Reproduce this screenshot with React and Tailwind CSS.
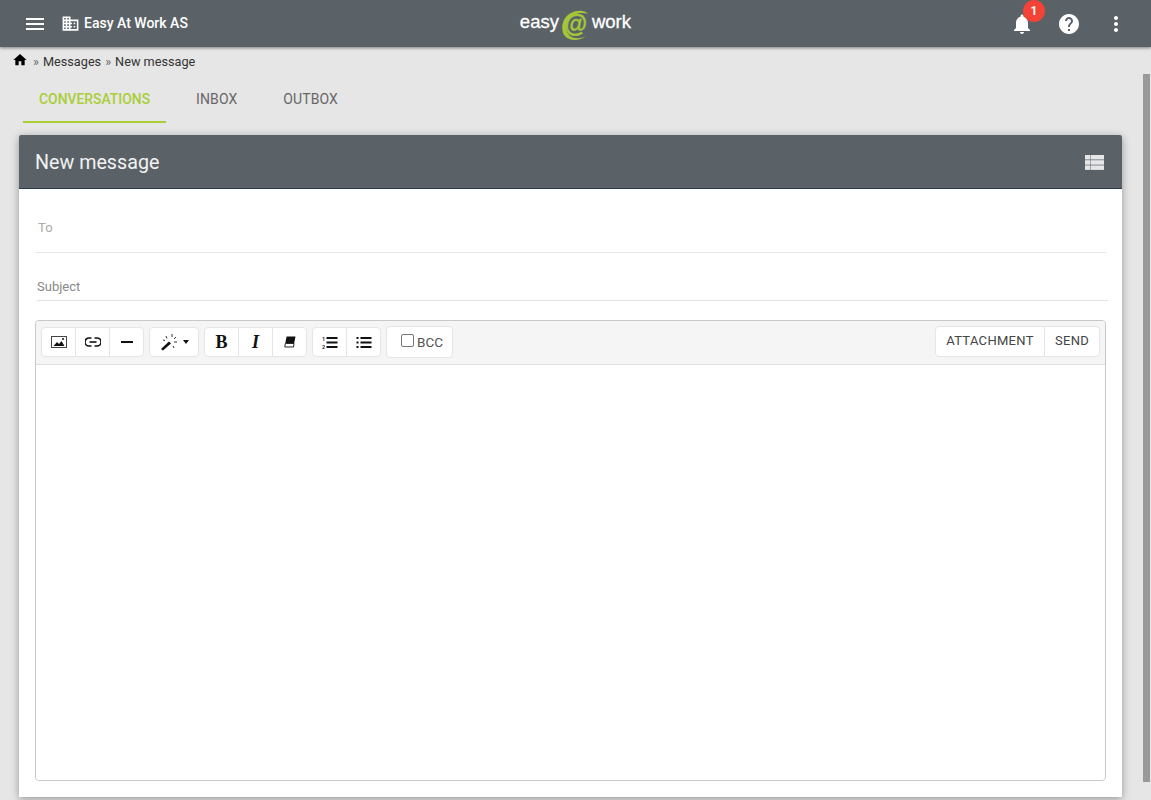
import React from 'react';

const Icon = ({ d, className }) => (
    <svg viewBox="0 0 24 24" fill="currentColor" className={className}>
        <path d={d} />
    </svg>
);

const icons = {
    menu: 'M3 18h18v-2H3v2zm0-5h18v-2H3v2zm0-7v2h18V6H3z',
    domain: 'M12 7V3H2v18h20V7H12zM6 19H4v-2h2v2zm0-4H4v-2h2v2zm0-4H4V9h2v2zm0-4H4V5h2v2zm4 12H8v-2h2v2zm0-4H8v-2h2v2zm0-4H8V9h2v2zm0-4H8V5h2v2zm10 12h-8v-2h2v-2h-2v-2h2v-2h-2V9h8v10zm-2-8h-2v2h2v-2zm0 4h-2v2h2v-2z',
    home: 'M10 20v-6h4v6h5v-8h3L12 3 2 12h3v8z',
    bell: 'M12 22c1.1 0 2-.9 2-2h-4c0 1.1.89 2 2 2zm6-6v-5c0-3.07-1.64-5.64-4.5-6.32V4c0-.83-.67-1.5-1.5-1.5s-1.5.67-1.5 1.5v.68C7.63 5.36 6 7.92 6 11v5l-2 2v1h16v-1l-2-2z',
    help: 'M12 2C6.48 2 2 6.48 2 12s4.48 10 10 10 10-4.48 10-10S17.52 2 12 2zm1 17h-2v-2h2v2zm2.07-7.75l-.9.92C13.45 12.9 13 13.5 13 15h-2v-.5c0-1.1.45-2.1 1.17-2.83l1.24-1.26c.37-.36.59-.86.59-1.41 0-1.1-.9-2-2-2s-2 .9-2 2H8c0-2.21 1.79-4 4-4s4 1.79 4 4c0 .88-.36 1.68-.93 2.25z',
    more: 'M12 8c1.1 0 2-.9 2-2s-.9-2-2-2-2 .9-2 2 .9 2 2 2zm0 2c-1.1 0-2 .9-2 2s.9 2 2 2 2-.9 2-2-.9-2-2-2zm0 6c-1.1 0-2 .9-2 2s.9 2 2 2 2-.9 2-2-.9-2-2-2z',
};

const PictureIcon = () => (
    <svg viewBox="0 0 16 14" className="w-[16px] h-[14px]">
        <rect x="0.5" y="1.5" width="15" height="11" fill="none" stroke="#444" />
        <path d="M2.5 11 L6 7 L8 9 L10.5 6 L13.5 11 Z" fill="#111" />
        <circle cx="12" cy="4" r="1" fill="#111" />
    </svg>
);

const LinkIcon = () => (
    <svg viewBox="0 0 16 10" className="w-[16px] h-[10px]" fill="none" stroke="#111" strokeWidth="1.6">
        <path d="M6.5 1H4a4 4 0 0 0 0 8h2.5" />
        <path d="M9.5 1H12a4 4 0 0 1 0 8H9.5" />
        <path d="M4.5 5h7" />
    </svg>
);

const WandIcon = () => (
    <svg viewBox="0 0 18 18" className="w-[18px] h-[18px]">
        <path d="M1 16 L9 8.5 L11 10.5 L3 17.5 Z" fill="#111" />
        <path d="M12 1v3M6 3l1 2.5M16 4l-2 2M14 9h3M13 13l1 2M5 7.5L3 7" stroke="#333" strokeWidth="1" fill="none" />
    </svg>
);

const EraserIcon = () => (
    <svg viewBox="0 0 12 12" className="w-[12px] h-[12px]">
        <path d="M2.6 0.5H11.5L10.2 7H1.3Z" fill="#111" />
        <path d="M1.3 7.5H10.1L9.5 11H0.8Z" fill="#fff" stroke="#111" strokeWidth="0.9" />
    </svg>
);

const ListIcon = ({ ordered }) => (
    <svg viewBox="0 0 16 13" className="w-[16px] h-[13px]">
        {ordered ? (
            <>
                <text x="0" y="4.5" fontSize="5.5" fontFamily="Roboto, sans-serif" fontWeight="700" fill="#333">1</text>
                <text x="0" y="12.5" fontSize="5.5" fontFamily="Roboto, sans-serif" fontWeight="700" fill="#333">2</text>
            </>
        ) : (
            <>
                <rect x="0.5" y="1" width="2" height="2" fill="#111" />
                <rect x="0.5" y="5.5" width="2" height="2" fill="#111" />
                <rect x="0.5" y="10" width="2" height="2" fill="#111" />
            </>
        )}
        <rect x="4.5" y="1" width="11" height="2" fill="#111" />
        <rect x="4.5" y="5.5" width="11" height="2" fill="#111" />
        <rect x="4.5" y="10" width="11" height="2" fill="#111" />
    </svg>
);

const TableListIcon = () => (
    <svg viewBox="0 0 19 15" className="w-[19px] h-[15px] mt-[2px]" fill="#e6e6e6">
        <rect x="0" y="0" width="5" height="4.5" />
        <rect x="5.5" y="0" width="13.5" height="4.5" />
        <rect x="0" y="5.2" width="5" height="4.5" />
        <rect x="5.5" y="5.2" width="13.5" height="4.5" />
        <rect x="0" y="10.4" width="5" height="4.5" />
        <rect x="5.5" y="10.4" width="13.5" height="4.5" />
    </svg>
);

const ToolButton = ({ children, className = '' }) => (
    <div className={`h-[30px] flex items-center justify-center bg-white border border-[#e3e6e9] -ml-px first:ml-0 first:rounded-l last:rounded-r ${className}`}>
        {children}
    </div>
);

const Logo = () => (
    <div className="flex items-center h-[47px] pb-[2px] text-white text-[18.5px] font-['Liberation_Sans',sans-serif] leading-none [-webkit-text-stroke:0.3px_#ffffff]">
        <span>easy</span>
        <div className="relative w-[33px] h-[30px] flex items-center justify-center mt-[4px]">
            <svg viewBox="0 0 33 30" className="absolute inset-0 w-[33px] h-[30px]">
                <path d="M5 25 C1 17 4 7 12 3 C18 0 26 0 29 4 C23 2 15 3 10 9 C6 14 6 22 11 26 C15 29 22 29 27 26 C21 31 10 32 5 25 Z" fill="#a4c639" />
            </svg>
            <span className="relative text-[#a4c639] text-[23px] font-bold italic [-webkit-text-stroke:0.5px_#a4c639]">@</span>
        </div>
        <span>work</span>
    </div>
);

const App = () => {
    return (
        <div className="relative h-[800px] overflow-hidden bg-[#e6e6e6] font-['Roboto',sans-serif]">
            <header className="relative z-10 h-[47px] bg-[#5a6268] shadow-[0_1px_3px_rgba(0,0,0,0.45)] flex items-center text-white">
                <Icon d={icons.menu} className="w-[24px] h-[24px] ml-[23px]" />
                <Icon d={icons.domain} className="w-[19px] h-[19px] ml-[14px] mt-[-1px]" />
                <span className="ml-[4px] text-[14px] font-medium">Easy At Work AS</span>
                <div className="flex-1 flex justify-center pr-[47px]">
                    <Logo />
                </div>
                <div className="relative">
                    <Icon d={icons.bell} className="w-[24px] h-[24px]" />
                    <span className="absolute top-[-12px] right-[-11px] w-[22px] h-[22px] rounded-full bg-[#f44336] text-white text-[12px] font-bold flex items-center justify-center">1</span>
                </div>
                <Icon d={icons.help} className="w-[24px] h-[24px] ml-[23px]" />
                <Icon d={icons.more} className="w-[24px] h-[24px] ml-[23px] mr-[23px]" />
            </header>

            <nav className="flex items-center h-[28px] pl-[12px] pt-[2px] text-[12.7px] text-[#333]">
                <Icon d={icons.home} className="w-[16px] h-[16px] text-black mt-[-4px]" />
                <span className="ml-[5px] text-[#666]">»</span>
                <span className="ml-[4px]">Messages</span>
                <span className="ml-[4px] text-[#666]">»</span>
                <span className="ml-[4px]">New message</span>
            </nav>

            <div className="flex gap-[14px] pl-[23px] h-[48px] text-[14px]">
                <div className="px-[16px] pt-[3px] flex items-center font-medium text-[13.9px] text-[#a9ce37] border-b-2 border-[#a9ce37]">CONVERSATIONS</div>
                <div className="px-[16px] flex items-center text-[#666] tracking-[0.1px]">INBOX</div>
                <div className="px-[16px] flex items-center text-[#666] tracking-[0.1px]">OUTBOX</div>
            </div>

            <main className="mt-[12px] ml-[19px] w-[1103px] h-[662px] bg-white rounded-t-[2px] shadow-[0_2px_8px_rgba(0,0,0,0.35)] flex flex-col">
                <div className="h-[54px] shrink-0 bg-[#5a6268] border-b border-[#2b3d4f] rounded-t-[2px] flex items-center justify-between pl-[16px] pr-[18px]">
                    <h2 className="text-[19.7px] pt-[2px] font-normal text-[#f2f2f2]">New message</h2>
                    <TableListIcon />
                </div>

                <div className="ml-[17px] mr-[16px] h-[63px] mt-px border-b border-[#e6e6e6] flex items-center pl-[2px] pt-[14px] text-[13px] text-[#aaa]">To</div>
                <div className="ml-[18px] mr-[14px] h-[48px] border-b border-[#e0e0e0] flex items-center pt-[20px] text-[13px] text-[#888]">Subject</div>

                <div className="mt-[19px] ml-[16px] mr-[16px] h-[461px] border border-[#c8c8c8] rounded-[4px] flex flex-col">
                    <div className="h-[44px] shrink-0 bg-[#f5f5f5] border-b border-[#ddd] rounded-t-[4px] flex items-start justify-between pl-[5px] pr-[5px] pt-[5px]">
                        <div className="flex items-start gap-[5px]">
                            <div className="flex mt-[1px]">
                                <ToolButton className="w-[35px]"><PictureIcon /></ToolButton>
                                <ToolButton className="w-[35px]"><LinkIcon /></ToolButton>
                                <ToolButton className="w-[35px]"><span className="w-[12px] h-[2px] bg-[#111]" /></ToolButton>
                            </div>
                            <div className="flex mt-[1px]">
                                <ToolButton className="w-[50px] gap-[5px]">
                                    <WandIcon />
                                    <span className="border-x-[3px] border-x-transparent border-t-[4px] border-t-[#111]" />
                                </ToolButton>
                            </div>
                            <div className="flex mt-[1px]">
                                <ToolButton className="w-[35px]"><span className="font-['Liberation_Serif',serif] font-bold text-[18px] text-[#111]">B</span></ToolButton>
                                <ToolButton className="w-[35px]"><span className="font-['Liberation_Serif',serif] font-bold italic text-[18px] text-[#111]">I</span></ToolButton>
                                <ToolButton className="w-[35px]"><EraserIcon /></ToolButton>
                            </div>
                            <div className="flex mt-[1px]">
                                <ToolButton className="w-[35px]"><ListIcon ordered /></ToolButton>
                                <ToolButton className="w-[35px]"><ListIcon /></ToolButton>
                            </div>
                            <div className="w-[67px] h-[32px] pl-[14px] bg-white border border-[#e3e6e9] rounded flex items-center text-[13.5px] text-[#555]">
                                <span className="w-[13px] h-[13px] border border-[#777] rounded-[2px] mr-[3px] mt-[-3px]" />
                                BCC
                            </div>
                        </div>
                        <div className="flex text-[13px] text-[#444] tracking-[0.3px]">
                            <ToolButton className="w-[110px] h-[31px] pb-[2px]">ATTACHMENT</ToolButton>
                            <ToolButton className="w-[56px] h-[31px] pb-[2px]">SEND</ToolButton>
                        </div>
                    </div>
                    <div className="flex-1 bg-white rounded-b-[4px]" />
                </div>
            </main>

            <div className="absolute left-[1143px] top-[74px] w-[7px] h-[708px] bg-[#9a9a9a]" />
        </div>
    );
};

export default App;
